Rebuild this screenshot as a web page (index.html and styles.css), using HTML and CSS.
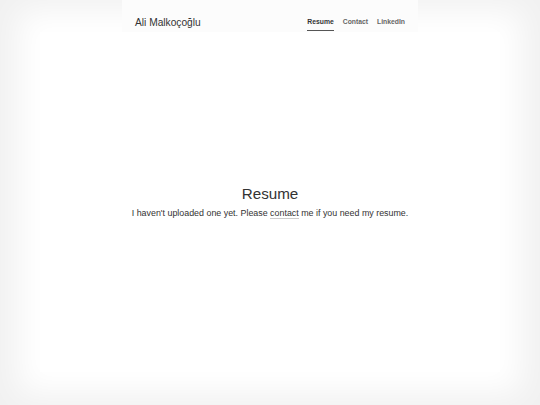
FILE: index.html
```html
<!DOCTYPE html>
<html lang="en">
<head>
<meta charset="utf-8">
<title>Resume - Ali Malkoçoğlu</title>
<link rel="stylesheet" href="styles.css">
</head>
<body>
<header class="site-header">
  <a class="brand" href="#">Ali Malkoçoğlu</a>
  <nav class="nav">
    <a class="nav-link active" href="#">Resume</a>
    <a class="nav-link" href="#">Contact</a>
    <a class="nav-link" href="#">LinkedIn</a>
  </nav>
</header>
<main class="main">
  <h1 class="title">Resume</h1>
  <p class="text">I haven't uploaded one yet. Please <a class="link" href="#">contact</a> me if you need my resume.</p>
</main>
</body>
</html>
```
FILE: styles.css
```css
html, body {
  margin: 0;
  padding: 0;
  height: 100%;
}
body {
  background: #f1f1f1;
  font-family: "Liberation Sans", Arial, sans-serif;
  color: #333;
  overflow: hidden;
}
.site-header {
  position: relative;
  z-index: 2;
  width: 270px;
  height: 32px;
  margin: 0 auto;
  padding: 0 13px;
  background: #fcfcfc;
  display: flex;
  align-items: center;
  justify-content: space-between;
}
.brand {
  font-size: 10.2px;
  color: #333;
  text-decoration: none;
  margin-top: 13px;
}
.nav {
  display: flex;
  gap: 9px;
  align-self: stretch;
  padding-top: 18px;
  box-sizing: border-box;
}
.nav-link {
  font-size: 6.8px;
  font-weight: bold;
  color: #666;
  text-decoration: none;
  height: 13px;
  box-sizing: border-box;
}
.nav-link:visited {
  color: #666;
}
.nav-link.active {
  color: #333;
  border-bottom: 1.5px solid #555;
}
.main {
  position: relative;
  z-index: 1;
  margin: 0 40px;
  height: 340px;
  background: #fff;
  box-shadow: 0 0 30px 22px #fff;
  box-sizing: border-box;
  padding-top: 150px;
  text-align: center;
}
.title {
  margin: 0;
  font-size: 15.2px;
  font-weight: normal;
  color: #333;
  line-height: 24px;
}
.text {
  margin: 0;
  font-size: 8.9px;
  line-height: 14px;
  color: #333;
}
.link {
  color: #333;
  text-decoration: none;
  border-bottom: 1px solid #ccc;
}
```
